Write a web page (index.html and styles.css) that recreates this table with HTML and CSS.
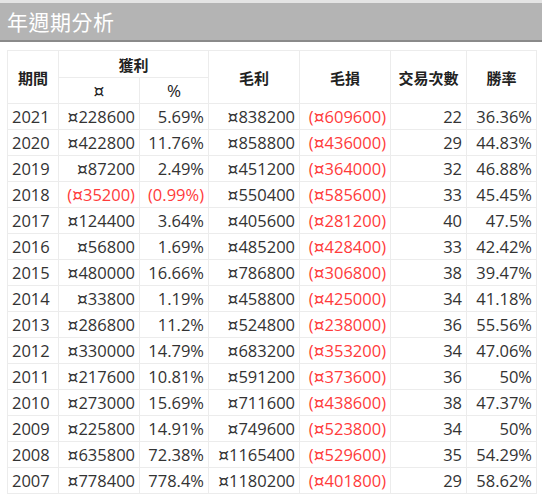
FILE: index.html
```html
<!DOCTYPE html>
<html lang="zh-Hant">
<head>
<meta charset="utf-8">
<link rel="stylesheet" href="styles.css">
</head>
<body>
<div class="title">年週期分析</div>
<div class="wrap">
<table class="grid">
  <colgroup>
    <col class="c1"><col class="c2"><col class="c3"><col class="c4"><col class="c5"><col class="c6"><col class="c7">
  </colgroup>
  <thead>
    <tr class="h1">
      <th rowspan="2">期間</th>
      <th colspan="2">獲利</th>
      <th rowspan="2">毛利</th>
      <th rowspan="2">毛損</th>
      <th rowspan="2">交易次數</th>
      <th rowspan="2">勝率</th>
    </tr>
    <tr class="h2">
      <th><span class="cur">¤</span></th>
      <th>%</th>
    </tr>
  </thead>
  <tbody>
    <tr><td class="yr">2021</td><td><span class="cur">¤</span>228600</td><td>5.69%</td><td><span class="cur">¤</span>838200</td><td class="neg">(<span class="cur">¤</span>609600)</td><td>22</td><td>36.36%</td></tr>
    <tr><td class="yr">2020</td><td><span class="cur">¤</span>422800</td><td>11.76%</td><td><span class="cur">¤</span>858800</td><td class="neg">(<span class="cur">¤</span>436000)</td><td>29</td><td>44.83%</td></tr>
    <tr><td class="yr">2019</td><td><span class="cur">¤</span>87200</td><td>2.49%</td><td><span class="cur">¤</span>451200</td><td class="neg">(<span class="cur">¤</span>364000)</td><td>32</td><td>46.88%</td></tr>
    <tr><td class="yr">2018</td><td class="neg">(<span class="cur">¤</span>35200)</td><td class="neg">(0.99%)</td><td><span class="cur">¤</span>550400</td><td class="neg">(<span class="cur">¤</span>585600)</td><td>33</td><td>45.45%</td></tr>
    <tr><td class="yr">2017</td><td><span class="cur">¤</span>124400</td><td>3.64%</td><td><span class="cur">¤</span>405600</td><td class="neg">(<span class="cur">¤</span>281200)</td><td>40</td><td>47.5%</td></tr>
    <tr><td class="yr">2016</td><td><span class="cur">¤</span>56800</td><td>1.69%</td><td><span class="cur">¤</span>485200</td><td class="neg">(<span class="cur">¤</span>428400)</td><td>33</td><td>42.42%</td></tr>
    <tr><td class="yr">2015</td><td><span class="cur">¤</span>480000</td><td>16.66%</td><td><span class="cur">¤</span>786800</td><td class="neg">(<span class="cur">¤</span>306800)</td><td>38</td><td>39.47%</td></tr>
    <tr><td class="yr">2014</td><td><span class="cur">¤</span>33800</td><td>1.19%</td><td><span class="cur">¤</span>458800</td><td class="neg">(<span class="cur">¤</span>425000)</td><td>34</td><td>41.18%</td></tr>
    <tr><td class="yr">2013</td><td><span class="cur">¤</span>286800</td><td>11.2%</td><td><span class="cur">¤</span>524800</td><td class="neg">(<span class="cur">¤</span>238000)</td><td>36</td><td>55.56%</td></tr>
    <tr><td class="yr">2012</td><td><span class="cur">¤</span>330000</td><td>14.79%</td><td><span class="cur">¤</span>683200</td><td class="neg">(<span class="cur">¤</span>353200)</td><td>34</td><td>47.06%</td></tr>
    <tr><td class="yr">2011</td><td><span class="cur">¤</span>217600</td><td>10.81%</td><td><span class="cur">¤</span>591200</td><td class="neg">(<span class="cur">¤</span>373600)</td><td>36</td><td>50%</td></tr>
    <tr><td class="yr">2010</td><td><span class="cur">¤</span>273000</td><td>15.69%</td><td><span class="cur">¤</span>711600</td><td class="neg">(<span class="cur">¤</span>438600)</td><td>38</td><td>47.37%</td></tr>
    <tr><td class="yr">2009</td><td><span class="cur">¤</span>225800</td><td>14.91%</td><td><span class="cur">¤</span>749600</td><td class="neg">(<span class="cur">¤</span>523800)</td><td>34</td><td>50%</td></tr>
    <tr><td class="yr">2008</td><td><span class="cur">¤</span>635800</td><td>72.38%</td><td><span class="cur">¤</span>1165400</td><td class="neg">(<span class="cur">¤</span>529600)</td><td>35</td><td>54.29%</td></tr>
    <tr><td class="yr">2007</td><td><span class="cur">¤</span>778400</td><td>778.4%</td><td><span class="cur">¤</span>1180200</td><td class="neg">(<span class="cur">¤</span>401800)</td><td>29</td><td>58.62%</td></tr>
  </tbody>
</table>
</div>
</body>
</html>
```

FILE: styles.css
```css
html, body {
  margin: 0;
  padding: 0;
  background: #ffffff;
}
body {
  font-family: "Open Sans", "Noto Sans CJK TC", sans-serif;
  color: #333333;
}
.title {
  background: #b4b4b4;
  border-top: 3px solid #e4e4e4;
  border-bottom: 2px solid #8a8a8a;
  height: 37px;
  line-height: 37px;
  padding-left: 7px;
  color: #ffffff;
  font-family: "Noto Sans CJK TC", sans-serif;
  font-size: 21px;
  letter-spacing: 0.5px;
}
.wrap {
  padding: 8px 0 0 7px;
}
.grid {
  border-collapse: collapse;
  table-layout: fixed;
  width: 529px;
}
.c1 { width: 51px; }
.c2 { width: 81px; }
.c3 { width: 69px; }
.c4 { width: 91px; }
.c5 { width: 91px; }
.c6 { width: 76px; }
.c7 { width: 70px; }
.grid th, .grid td {
  border: 1px solid #ececec;
  padding: 0 4px;
  white-space: nowrap;
}
.grid th {
  font-family: "Noto Sans CJK TC", sans-serif;
  font-weight: bold;
  font-size: 15px;
  color: #222222;
  text-align: center;
}
.h1 th { height: 26px; }
.h2 th { height: 25px; line-height: 25px; font-family: "Open Sans", sans-serif; font-size: 17px; font-weight: normal; }
.grid td {
  height: 25px;
  font-size: 16.5px;
  text-align: right;
  line-height: 25px;
}
.cur {
  font-family: "DejaVu Sans", sans-serif;
  font-size: 17px;
  line-height: 1;
}
.grid td.yr {
  text-align: left;
}
.grid td.neg {
  color: #ff3b3b;
}
```
